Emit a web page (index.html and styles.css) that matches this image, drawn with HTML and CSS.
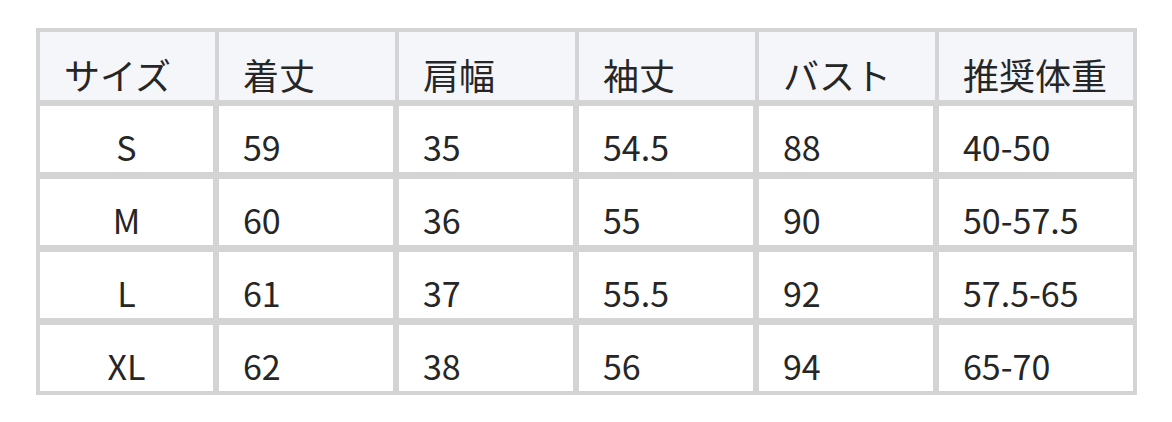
FILE: index.html
```html
<!DOCTYPE html>
<html lang="ja">
<head>
<meta charset="utf-8">
<link rel="stylesheet" href="styles.css">
</head>
<body>
<div class="size-table">
  <div class="row head">
    <div class="cell">サイズ</div>
    <div class="cell">着丈</div>
    <div class="cell">肩幅</div>
    <div class="cell">袖丈</div>
    <div class="cell">バスト</div>
    <div class="cell">推奨体重</div>
  </div>
  <div class="row">
    <div class="cell size">S</div>
    <div class="cell">59</div>
    <div class="cell">35</div>
    <div class="cell">54.5</div>
    <div class="cell">88</div>
    <div class="cell">40-50</div>
  </div>
  <div class="row">
    <div class="cell size">M</div>
    <div class="cell">60</div>
    <div class="cell">36</div>
    <div class="cell">55</div>
    <div class="cell">90</div>
    <div class="cell">50-57.5</div>
  </div>
  <div class="row">
    <div class="cell size">L</div>
    <div class="cell">61</div>
    <div class="cell">37</div>
    <div class="cell">55.5</div>
    <div class="cell">92</div>
    <div class="cell">57.5-65</div>
  </div>
  <div class="row">
    <div class="cell size">XL</div>
    <div class="cell">62</div>
    <div class="cell">38</div>
    <div class="cell">56</div>
    <div class="cell">94</div>
    <div class="cell">65-70</div>
  </div>
</div>
</body>
</html>
```

FILE: styles.css
```css
html, body {
  margin: 0;
  padding: 0;
  background: #ffffff;
}

body {
  padding: 28px 0 0 36px;
  font-family: "Noto Sans CJK JP", "Noto Sans", sans-serif;
  color: #262626;
}

.size-table {
  width: 1101px;
  box-sizing: border-box;
  background: #d4d4d4;
  padding: 4px;
  display: flex;
  flex-direction: column;
  gap: 7px;
}

.row {
  display: grid;
  grid-template-columns: 175px 176px 176px 176px 176px 194px;
  column-gap: 4px;
  height: 66px;
}

.row.head {
  height: 68px;
  margin-bottom: -1px;
}

.cell {
  background: #ffffff;
  font-size: 34px;
  line-height: 34px;
  padding: 24px 0 0 24px;
  box-sizing: border-box;
  white-space: nowrap;
}

.row:not(.head) .cell:not(:last-child) {
  border-right: 2px solid #d4d4d4;
}

.head .cell {
  background: #f5f6fa;
  font-size: 36px;
  line-height: 36px;
  padding-top: 24px;
}

.cell.size {
  text-align: center;
  padding-left: 0;
}
```
